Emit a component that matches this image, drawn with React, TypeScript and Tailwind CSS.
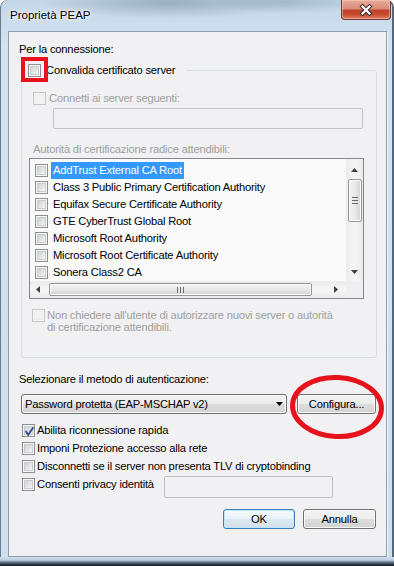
import React from 'react';

const certs = [
  'AddTrust External CA Root',
  'Class 3 Public Primary Certification Authority',
  'Equifax Secure Certificate Authority',
  'GTE CyberTrust Global Root',
  'Microsoft Root Authority',
  'Microsoft Root Certificate Authority',
  'Sonera Class2 CA',
];

function Check({ checked = false, disabled = false }: { checked?: boolean; disabled?: boolean }) {
  return (
    <span
      className={`relative flex h-[13px] w-[13px] shrink-0 items-center justify-center border ${
        disabled ? 'border-[#c6c6c6] bg-[#f3f3f3]' : 'border-[#8e8f8f] bg-[#f6f6f6]'
      }`}
    >
      <span
        className={`h-[9px] w-[9px] border ${
          disabled
            ? 'border-[#ececec] bg-[#f2f2f2]'
            : 'border-[#c9ccd0] bg-[linear-gradient(135deg,#cfd2d6_0%,#e3e4e6_55%,#f7f7f7_100%)]'
        }`}
      />
      {checked && (
        <svg className="absolute left-[1px] top-[1px]" width="11" height="11" viewBox="0 0 11 11">
          <path d="M1.6 5 L4.2 8.8 L9.4 1.2" fill="none" stroke="#3b4f90" strokeWidth="2" />
        </svg>
      )}
    </span>
  );
}

function Button({ children, width, focused = false }: { children: React.ReactNode; width: string; focused?: boolean }) {
  return (
    <div
      className={`flex h-[20px] items-center justify-center rounded-[3px] border ${width} ${
        focused
          ? 'border-[#3c7fb1] bg-[linear-gradient(180deg,#f4f9fc_0%,#ecf3f8_50%,#dde8f0_50%,#d3e0ea_100%)] shadow-[inset_0_0_0_1px_#bfe5fa]'
          : 'border-[#707070] bg-[linear-gradient(180deg,#f3f3f3_0%,#ececec_50%,#dedede_50%,#d2d2d2_100%)] shadow-[inset_0_0_0_1px_#fbfbfb]'
      }`}
    >
      {children}
    </div>
  );
}

function CloseButton() {
  return (
    <div className="mr-[3px] flex h-[20px] w-[50px] items-center justify-center rounded-b-[4px] border border-t-0 border-[#6b3a34] bg-[linear-gradient(180deg,#e8aa9b_0%,#d98c79_45%,#c2432a_55%,#c54a2e_75%,#dc8064_100%)] shadow-[inset_0_0_0_1px_rgba(255,215,205,0.45)]">
      <svg width="14" height="12" viewBox="0 0 14 12">
        <path d="M3.5 2.5 L10.5 9.5 M10.5 2.5 L3.5 9.5" stroke="#3b2c2c" strokeWidth="4.2" strokeLinecap="square" />
        <path d="M3.5 2.5 L10.5 9.5 M10.5 2.5 L3.5 9.5" stroke="#ffffff" strokeWidth="2.2" strokeLinecap="square" />
      </svg>
    </div>
  );
}

function VScroll() {
  return (
    <div className="flex flex-col items-center bg-[linear-gradient(90deg,#ebebed_0%,#f6f6f7_50%,#ebebed_100%)]">
      <svg className="mt-[9px]" width="7" height="4" viewBox="0 0 7 4">
        <path d="M0 4 L3.5 0 L7 4 Z" fill="#404040" />
      </svg>
      <div className="mt-[7px] flex h-[43px] w-[14px] flex-col items-center justify-center gap-[2px] rounded-[2px] border border-[#979797] bg-[linear-gradient(90deg,#f5f5f5_0%,#e8e8e8_50%,#d3d3d3_100%)] shadow-[inset_0_0_0_1px_#fafafa]">
        <span className="h-[1px] w-[6px] bg-[#6a6a6a]" />
        <span className="h-[1px] w-[6px] bg-[#6a6a6a]" />
        <span className="h-[1px] w-[6px] bg-[#6a6a6a]" />
      </div>
      <svg className="mt-[48px]" width="7" height="4" viewBox="0 0 7 4">
        <path d="M0 0 L7 0 L3.5 4 Z" fill="#404040" />
      </svg>
    </div>
  );
}

function HScroll() {
  return (
    <div className="flex items-center bg-[linear-gradient(180deg,#ebebed_0%,#f6f6f7_50%,#ebebed_100%)]">
      <svg className="ml-[6px]" width="4" height="7" viewBox="0 0 4 7">
        <path d="M4 0 L0 3.5 L4 7 Z" fill="#404040" />
      </svg>
      <div className="ml-[9px] flex h-[13px] w-[263px] items-center justify-center gap-[2px] rounded-[2px] border border-[#979797] bg-[linear-gradient(180deg,#f5f5f5_0%,#e8e8e8_50%,#d3d3d3_100%)] shadow-[inset_0_0_0_1px_#fafafa]">
        <span className="h-[6px] w-[1px] bg-[#6a6a6a]" />
        <span className="h-[6px] w-[1px] bg-[#6a6a6a]" />
        <span className="h-[6px] w-[1px] bg-[#6a6a6a]" />
      </div>
      <svg className="ml-[22px]" width="4" height="7" viewBox="0 0 4 7">
        <path d="M0 0 L4 3.5 L0 7 Z" fill="#404040" />
      </svg>
    </div>
  );
}

function CertList() {
  return (
    <div className="ml-[7px] mt-[1px] grid h-[141px] w-[335px] grid-cols-[316px_17px] grid-rows-[122px_17px] border border-[#828790] bg-[#fafafb]">
      <div className="overflow-hidden pl-[5px] pt-[3px]">
        {certs.map((c, i) => (
          <div key={c} className="flex h-[17px] items-center">
            <Check />
            <span
              className={`ml-[3px] whitespace-nowrap px-[2px] leading-[17px] ${
                i === 0 ? 'bg-[#3399ff] text-white' : 'text-black'
              }`}
            >
              {c}
            </span>
          </div>
        ))}
      </div>
      <VScroll />
      <HScroll />
      <div className="bg-[#efeff1]" />
    </div>
  );
}

export default function App() {
  return (
    <div className="relative flex h-[566px] w-[394px] flex-col overflow-hidden rounded-t-[7px] bg-[radial-gradient(ellipse_130px_16px_at_170px_3px,rgba(105,125,145,0.45),transparent),radial-gradient(ellipse_80px_12px_at_290px_2px,rgba(115,135,155,0.35),transparent),linear-gradient(180deg,#c4d7e9_0%,#d3e3f2_8%,#cde0f1_100%)] font-['Liberation_Sans',Arial,sans-serif] text-[11.2px] tracking-[-0.2px] text-black shadow-[inset_1px_0_0_#6b7b8b,inset_-2px_0_0_#56677a]">
      {/* title bar */}
      <div className="flex h-[31px] shrink-0 items-start justify-between">
        <span className="pl-[10px] pt-[8px] text-[11.5px] leading-[15px] tracking-normal [text-shadow:0_0_6px_#fff,0_0_3px_#fff]">
          Proprietà PEAP
        </span>
        <CloseButton />
      </div>

      {/* client area */}
      <div className="ml-[8px] mr-[7px] flex flex-1 flex-col border border-[#8d9dae] bg-[#f1f0f3] pl-[10px] pr-[9px] pt-[10px] leading-[15px] shadow-[1px_1px_0_#f4f8fc]">
        <div className="h-[15px]">Per la connessione:</div>

        <fieldset className="ml-[2px] mt-[6px] w-[356px] rounded-[3px] border border-[#d5dfe5] pb-[24px]">
          <legend className="w-[165px] pl-[6px]">
            <span className="flex h-[15px] items-center gap-[5px]">
              <Check />
              <span className="whitespace-nowrap">Convalida certificato server</span>
            </span>
          </legend>

          <div className="ml-[11px] mt-[13px] flex h-[15px] items-center gap-[3px] text-[#a0a0a0]">
            <Check disabled />
            <span>Connetti ai server seguenti:</span>
          </div>
          <div className="ml-[31px] mt-[2px] h-[21px] w-[310px] rounded-[2px] border border-[#c4c4c4]" />

          <div className="ml-[11px] mt-[13px] h-[15px] text-[#a0a0a0]">Autorità di certificazione radice attendibili:</div>
          <CertList />

          <div className="ml-[10px] mt-[10px] flex items-start gap-[2px] text-[#a0a0a0]">
            <Check disabled />
            <span className="leading-[12px]">
              Non chiedere all'utente di autorizzare nuovi server o autorità
              <br />
              di certificazione attendibili.
            </span>
          </div>
        </fieldset>

        <div className="mt-[14px] h-[15px]">Selezionare il metodo di autenticazione:</div>

        <div className="mt-[7px] flex items-start">
          <div className="ml-[2px] flex h-[20px] w-[266px] items-center justify-between rounded-[3px] border border-[#707070] bg-[linear-gradient(180deg,#f3f3f3_0%,#ececec_50%,#dedede_50%,#d2d2d2_100%)] pl-[3px] pr-[3px] shadow-[inset_0_0_0_1px_#fbfbfb]">
            <span>Password protetta (EAP-MSCHAP v2)</span>
            <svg width="7" height="4" viewBox="0 0 7 4">
              <path d="M0 0 L7 0 L3.5 4 Z" fill="#000" />
            </svg>
          </div>
          <div className="ml-[10px]">
            <Button width="w-[79px]">Configura...</Button>
          </div>
        </div>

        <div className="ml-[3px] mt-[7px] flex flex-col">
          <div className="flex h-[18px] items-center gap-[2px]">
            <Check checked />
            <span>Abilita riconnessione rapida</span>
          </div>
          <div className="flex h-[18px] items-center gap-[2px]">
            <Check />
            <span>Imponi Protezione accesso alla rete</span>
          </div>
          <div className="flex h-[18px] items-center gap-[2px]">
            <Check />
            <span>Disconnetti se il server non presenta TLV di cryptobinding</span>
          </div>
          <div className="flex items-start">
            <div className="flex h-[18px] w-[142px] items-center gap-[2px]">
              <Check />
              <span>Consenti privacy identità</span>
            </div>
            <div className="mt-[1px] h-[22px] w-[169px] rounded-[2px] border border-[#c0c0c0]" />
          </div>
        </div>

        <div className="mt-[11px] flex justify-end gap-[8px] pr-[1px]">
          <Button width="w-[72px]" focused>
            OK
          </Button>
          <Button width="w-[73px]">Annulla</Button>
        </div>
      </div>

      {/* bottom frame */}
      <div className="h-[9px] shrink-0 bg-[linear-gradient(180deg,#cfe0ef_0%,#bccfe2_35%,#6f8294_55%,#2d3946_80%,#161c23_100%)]" />

      {/* annotation: red square */}
      <div className="absolute left-[21px] top-[57px] h-[25px] w-[27px] border-4 border-[#e8121c]" />
      {/* annotation: red ellipse */}
      <svg className="absolute left-[287px] top-[373px]" width="100" height="68" viewBox="0 0 100 68">
        <ellipse cx="50" cy="34" rx="44.5" ry="29.5" fill="none" stroke="#e8121c" strokeWidth="5" transform="rotate(3 50 34)" />
      </svg>
    </div>
  );
}
